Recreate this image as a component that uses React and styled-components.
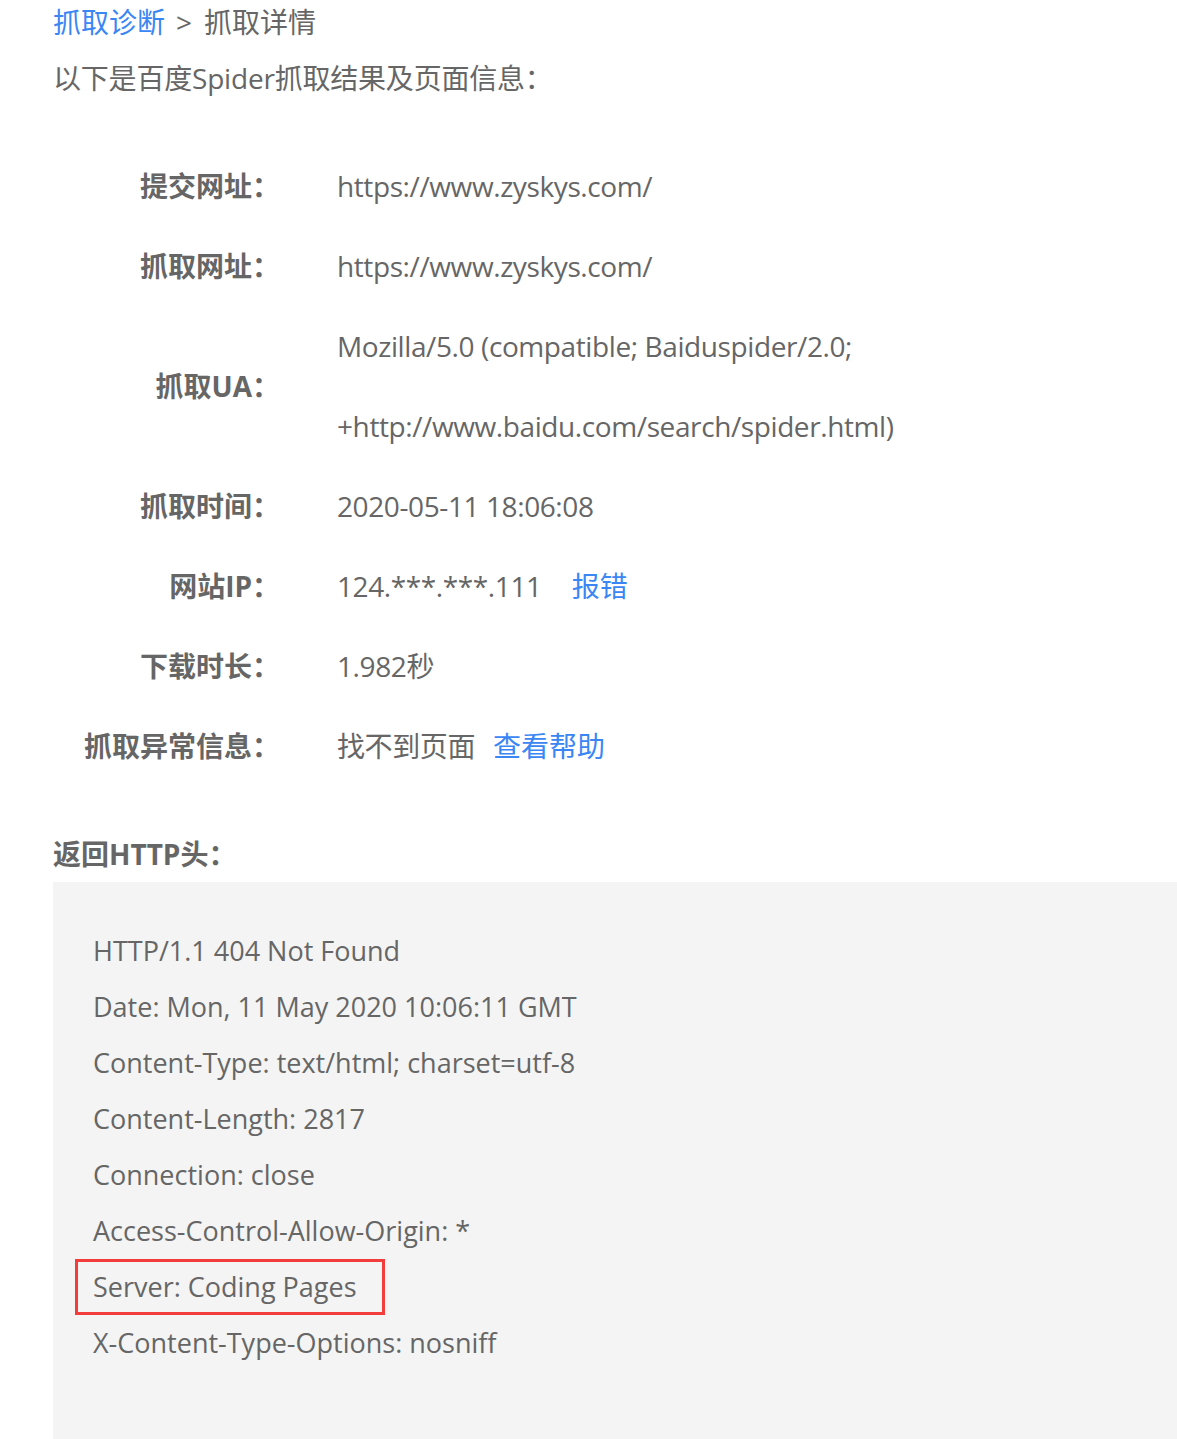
import styled, { createGlobalStyle } from 'styled-components'

const GlobalStyle = createGlobalStyle`
  html, body {
    margin: 0;
    padding: 0;
    background: #fff;
  }
  body {
    font-family: 'Open Sans', 'Noto Sans CJK SC', sans-serif;
    color: #666;
  }
`

const fields = [
  { label: '提交网址：', value: 'https://www.zyskys.com/' },
  { label: '抓取网址：', value: 'https://www.zyskys.com/' },
  {
    label: '抓取UA：',
    value: ['Mozilla/5.0 (compatible; Baiduspider/2.0;', '+http://www.baidu.com/search/spider.html)']
  },
  { label: '抓取时间：', value: '2020-05-11 18:06:08' },
  { label: '网站IP：', value: '124.***.***.111', link: '报错', linkGap: 30 },
  { label: '下载时长：', value: '1.982秒' },
  { label: '抓取异常信息：', value: '找不到页面', link: '查看帮助', linkGap: 18 }
]

const headers = [
  'HTTP/1.1 404 Not Found',
  'Date: Mon, 11 May 2020 10:06:11 GMT',
  'Content-Type: text/html; charset=utf-8',
  'Content-Length: 2817',
  'Connection: close',
  'Access-Control-Allow-Origin: *',
  'Server: Coding Pages',
  'X-Content-Type-Options: nosniff'
]

export default function App() {
  return (
    <Page>
      <GlobalStyle />
      <Crumbs>
        <Link>抓取诊断</Link>
        <Separator>&gt;</Separator>
        抓取详情
      </Crumbs>
      <Intro>以下是百度Spider抓取结果及页面信息：</Intro>

      <Fields>
        {fields.map(field => (
          <Row key={field.label}>
            <Label>{field.label}</Label>
            <Value>
              {Array.isArray(field.value)
                ? field.value.map(line => <ValueLine key={line}>{line}</ValueLine>)
                : field.value}
              {field.link && <Link $gap={field.linkGap}>{field.link}</Link>}
            </Value>
          </Row>
        ))}
      </Fields>

      <SectionTitle>返回HTTP头：</SectionTitle>
      <HeaderBox>
        {headers.map(line => (
          <HeaderLine key={line} $marked={line.startsWith('Server')}>
            {line}
          </HeaderLine>
        ))}
      </HeaderBox>
    </Page>
  )
}

const Page = styled.div`
  padding-left: 53px;
  font-size: 28px;
`

const Link = styled.span`
  color: #3a86f4;
  margin-left: ${p => p.$gap || 0}px;
  letter-spacing: 0;
`

const Separator = styled.span`
  margin: 0 12px 0 11px;
`

const Crumbs = styled.div`
  line-height: 44px;
`

const Intro = styled.div`
  margin-top: 12px;
  line-height: 44px;
  letter-spacing: -0.2px;
`

const Fields = styled.div`
  margin-top: 46px;
  display: flex;
  flex-direction: column;
`

const Row = styled.div`
  display: grid;
  grid-template-columns: 227px 1fr;
  column-gap: 57px;
  align-items: center;
  line-height: 80px;
`

const Label = styled.div`
  text-align: right;
  font-weight: 700;
  color: #666;
  white-space: nowrap;
`

const Value = styled.div`
  white-space: nowrap;
  letter-spacing: -0.4px;
`

const ValueLine = styled.div``

const SectionTitle = styled.div`
  margin-top: 40px;
  line-height: 56px;
  font-weight: 700;
`

const HeaderBox = styled.div`
  background: #f4f4f4;
  padding: 41px 0 90px 40px;
  font-size: 27px;
  line-height: 56px;
`

const HeaderLine = styled.div`
  ${p =>
    p.$marked &&
    `
    display: inline-block;
    margin-left: -18px;
    padding: 0 25px 0 15px;
    border: 3px solid #f33c3c;
    line-height: 50px;
  `}
`
